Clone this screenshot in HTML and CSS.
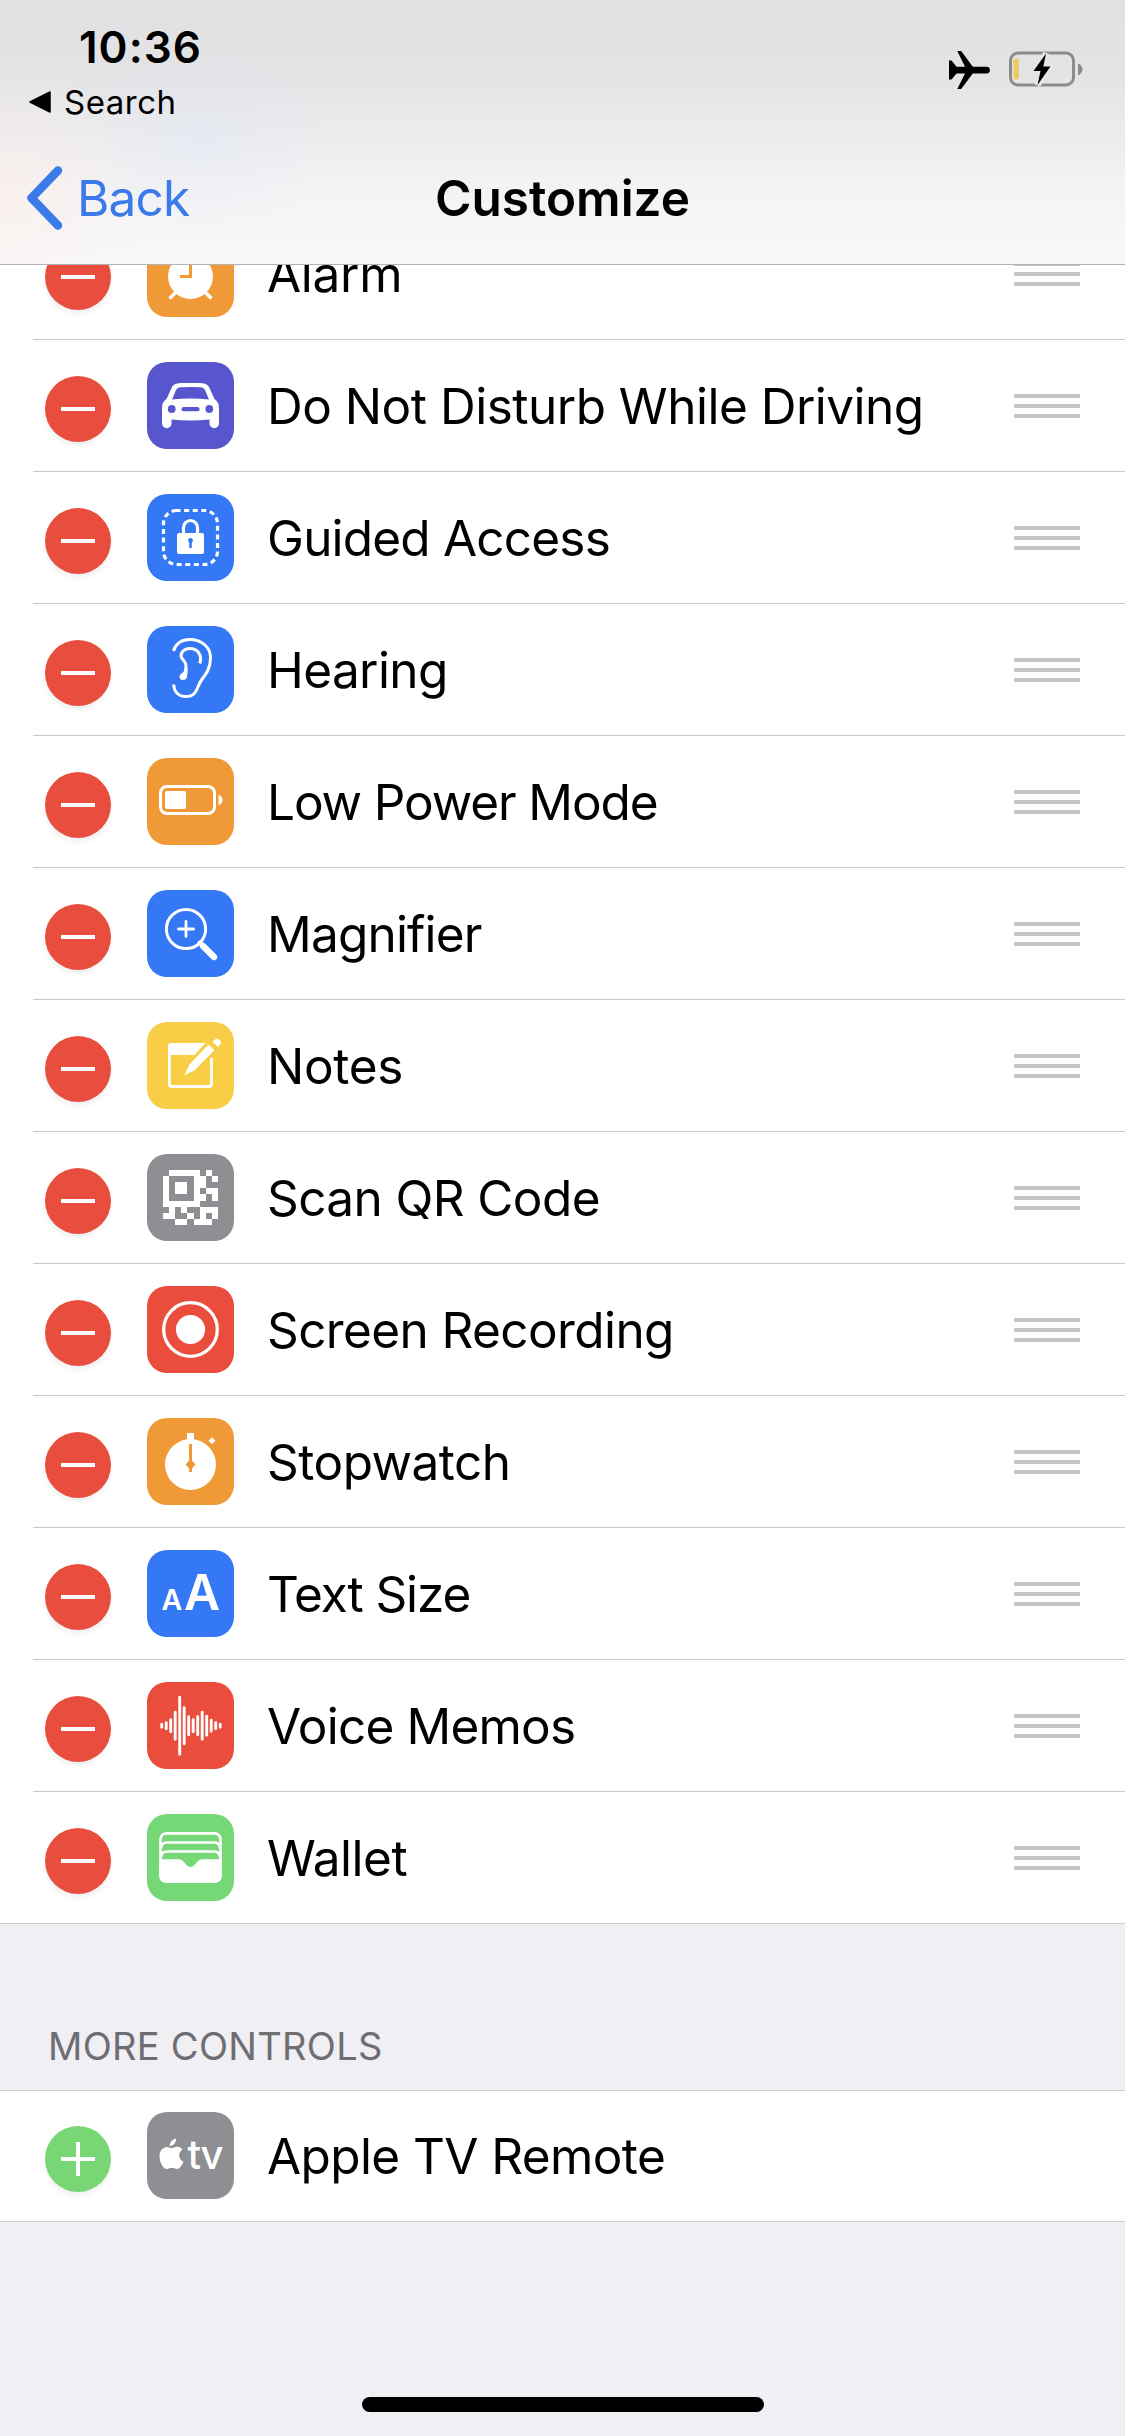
FILE: index.html
```html
<!DOCTYPE html>
<html lang="en">
<head>
  <meta charset="UTF-8" />
  <title>Customize</title>
  <link rel="stylesheet" href="styles.css">
</head>
<body>
  <header class="header">
    <div class="status-bar">
      <div class="status-left">
        <div class="time">10:36</div>
        <div class="return-app">
          <svg width="22" height="22" viewBox="0 0 22 22"><path d="M1 11L21 1V21Z" stroke="#000" stroke-width="1.500" stroke-linejoin="round" /></svg>
          <span>Search</span>
        </div>
      </div>
      <div class="status-right">
        <svg width="42" height="38" viewBox="0 0 42 38">
          <path d="M0 9.500H2.500L7.500 15.700H16L8.300 0H12.200L23.800 15.700H37.500a3.400 3.400 0 0 1 0 6.800H23.800L12.200 38H8.300L16 22.500H7.500L2.500 28.500H0Z" />
        </svg>
        <svg width="75" height="38" viewBox="0 0.500 75 38">
          <rect x="1.500" y="2.500" width="63" height="32" rx="7.500" fill="none" stroke="#8b8b8d" stroke-width="3" />
          <path d="M69 13q4.500 2 4.500 5.800T69 25Z" fill="#8b8b8d" />
          <rect x="4.500" y="8" width="5.500" height="21" rx="2" fill="#eecb62" />
          <path d="M37 3L24.500 20.500H31.500L28.500 34.500L41.500 16H34.300Z" stroke="#e5e5e7" stroke-width="6" paint-order="stroke" />
        </svg>
      </div>
    </div>
    <nav class="nav">
      <a class="back">
        <svg width="38" height="66" viewBox="0 0 38 66"><path d="M32 5.500L5.500 33L32 60.500" fill="none" stroke="#3b7ae9" stroke-width="8.500" stroke-linecap="round" stroke-linejoin="round" /></svg>
        <span>Back</span>
      </a>
      <h1>Customize</h1>
    </nav>
  </header>

  <ul class="list" id="included">
    <li class="row">
      <span class="toggle remove"></span>
      <svg class="icon orange" viewBox="0 0 87 87">
        <path d="M29 62L22.500 68.500M58 62L64.500 68.500" stroke="#fff" stroke-width="3.500" />
        <circle cx="43.500" cy="46.500" r="22.500" fill="#fff" />
        <path d="M43.500 31V46.500H33" fill="none" stroke="#ef9a37" stroke-width="3" />
      </svg>
      <span class="label loose">Alarm</span>
      <span class="handle"></span>
    </li>
    <li class="row">
      <span class="toggle remove"></span>
      <svg class="icon purple" viewBox="0 0 87 87">
        <path fill="#fff" fill-rule="evenodd" d="M35 21H52Q60 21 62 25L67.500 37Q72 40 72 46V61.500a4.700 4.700 0 0 1-9.500 0V57.500Q43.500 59.500 24.500 57.500V61.500a4.700 4.700 0 0 1-9.500 0V46Q15 40 19.500 37L25 25Q27 21 35 21ZM25 37.500Q43.500 35.500 62 37.500L58 28Q57 25.500 53.500 25.300Q43.500 24.700 33.500 25.300Q30 25.500 29 28Z" />
        <circle cx="24.700" cy="47" r="3.900" fill="#5856ce" />
        <circle cx="62.300" cy="47" r="3.900" fill="#5856ce" />
        <rect x="34.500" y="45" width="18" height="4.300" rx="2.100" fill="#5856ce" />
      </svg>
      <span class="label">Do Not Disturb While Driving</span>
      <span class="handle"></span>
    </li>
    <li class="row">
      <span class="toggle remove"></span>
      <svg class="icon blue" viewBox="0 0 87 87">
        <rect x="16.500" y="16.500" width="54" height="54" rx="13" fill="none" stroke="#fff" stroke-width="3.200" stroke-dasharray="5 3.600" stroke-dashoffset="1" />
        <path d="M36.500 40V33.500a7 7 0 0 1 14 0V40" fill="none" stroke="#fff" stroke-width="3.200" />
        <rect x="30" y="39" width="27" height="21" rx="2" fill="#fff" />
        <circle cx="43.500" cy="46.500" r="2.400" fill="#3478f6" />
        <path d="M43.500 46V54" stroke="#3478f6" stroke-width="2.600" />
      </svg>
      <span class="label tight">Guided Access</span>
      <span class="handle"></span>
    </li>
    <li class="row">
      <span class="toggle remove"></span>
      <svg class="icon blue" viewBox="0 0 87 87">
        <g fill="none" stroke="#fff" stroke-width="3">
          <path d="M26.500 25C29 17 35.500 13.500 43 13.500C55 13.500 63.500 21.500 63.500 31.500C63.500 42 59.500 47.500 54.500 54C49.500 60.500 51 70.500 38.500 70.500C31.500 70.500 27 66 26.700 58.500" />
          <path d="M52.800 37.500C55.500 29 50.500 22.500 43 22.500C35.500 22.500 33 28.500 34.500 31.500C36.500 35 39 36 39 40C39 44 38.300 46 38 50" />
        </g>
        <path d="M37.500 42H40.500Q41 46 40 50.500Q39.500 54 36 54Q32.500 54 32.500 50.500Q32.500 48.500 34.700 47.300Q37.500 46 37.500 42Z" fill="#fff" />
      </svg>
      <span class="label snug">Hearing</span>
      <span class="handle"></span>
    </li>
    <li class="row">
      <span class="toggle remove"></span>
      <svg class="icon orange" viewBox="0 0 87 87">
        <rect x="13.500" y="28.500" width="54" height="27" rx="6.500" fill="none" stroke="#fff" stroke-width="3" />
        <rect x="18" y="33" width="21" height="18" rx="2" fill="#fff" />
        <path d="M71.500 37Q75.500 38 75.500 42T71.500 47Z" fill="#fff" />
      </svg>
      <span class="label tighter">Low Power Mode</span>
      <span class="handle"></span>
    </li>
    <li class="row">
      <span class="toggle remove"></span>
      <svg class="icon blue" viewBox="0 0 87 87">
        <g fill="none" stroke="#fff" stroke-linecap="round">
          <circle cx="39" cy="39" r="19.600" stroke-width="3" />
          <path d="M39 31.500V46.500M31.500 39H46.500" stroke-width="2.800" />
          <path d="M52.500 52.500L55 55" stroke-width="4" />
          <path d="M56 56L67 67" stroke-width="6.500" />
        </g>
      </svg>
      <span class="label tight">Magnifier</span>
      <span class="handle"></span>
    </li>
    <li class="row">
      <span class="toggle remove"></span>
      <svg class="icon yellow" viewBox="0 0 87 87">
        <path d="M21 33V24Q21 21 24 21H58.500L47.500 33Z" fill="#fff" />
        <path d="M22.300 30V62Q22.300 64.500 24.800 64.500H62Q64.500 64.500 64.500 62V36" fill="none" stroke="#fff" stroke-width="2.800" />
        <path d="M37.500 53L42 43L61.500 22.500L67.500 28L47.500 48.500Z" fill="#fff" stroke="#f7ce46" stroke-width="3" paint-order="stroke" />
        <path d="M65.500 20L68.500 17Q70 16 71.500 17L73.500 19Q74.500 20.500 73.500 22L71 25Z" fill="#fff" />
      </svg>
      <span class="label loose">Notes</span>
      <span class="handle"></span>
    </li>
    <li class="row">
      <span class="toggle remove"></span>
      <svg class="icon gray" viewBox="0 0 87 87">
        <!-- 9x9 modules, one line per row -->
        <path transform="translate(16 16) scale(6.100)" fill="#fff" shape-rendering="crispEdges" d="
          M1 0h5v1h-5z M7 0h1v1h-1z
          M0 1h1v1h-1z M5 1h2v1h-2z M8 1h1v1h-1z
          M0 2h1v1h-1z M2 2h2v1h-2z M5 2h2v1h-2z
          M0 3h1v1h-1z M2 3h2v1h-2z M5 3h1v1h-1z M7 3h2v1h-2z
          M0 4h1v1h-1z M5 4h2v1h-2z M8 4h1v1h-1z
          M0 5h6v1h-6z
          M1 6h1v1h-1z M3 6h1v1h-1z M6 6h3v1h-3z
          M0 7h2v1h-2z M4 7h1v1h-1z M6 7h1v1h-1z M8 7h1v1h-1z
          M2 8h2v1h-2z M5 8h3v1h-3z" />
      </svg>
      <span class="label snug">Scan QR Code</span>
      <span class="handle"></span>
    </li>
    <li class="row">
      <span class="toggle remove"></span>
      <svg class="icon red" viewBox="0 0 87 87">
        <circle cx="43.500" cy="43.500" r="26.800" fill="none" stroke="#fff" stroke-width="3.300" />
        <circle cx="43.500" cy="43.500" r="14.600" fill="#fff" />
      </svg>
      <span class="label snug">Screen Recording</span>
      <span class="handle"></span>
    </li>
    <li class="row">
      <span class="toggle remove"></span>
      <svg class="icon orange" viewBox="0 0 87 87">
        <circle cx="43.500" cy="46.500" r="25.500" fill="#fff" />
        <rect x="40" y="15" width="7" height="9" fill="#fff" />
        <path d="M63.300 21L66.700 24.500" stroke="#fff" stroke-width="5" />
        <path d="M43.500 26V54" stroke="#ef9a37" stroke-width="3" />
        <path d="M43.500 41L48.500 46.500L43.500 52L38.500 46.500Z" fill="#ef9a37" />
      </svg>
      <span class="label">Stopwatch</span>
      <span class="handle"></span>
    </li>
    <li class="row">
      <span class="toggle remove"></span>
      <svg class="icon blue" viewBox="0 0 87 87">
        <text class="glyph" x="14.500" y="60" font-size="28.500" textLength="21">A</text>
        <text class="glyph" x="37" y="60" font-size="49.500" textLength="36">A</text>
      </svg>
      <span class="label tighter">Text Size</span>
      <span class="handle"></span>
    </li>
    <li class="row">
      <span class="toggle remove"></span>
      <svg class="icon red" viewBox="0 0 87 87">
        <path d="M14.700 42.200v3M19.200 40.700v6M23.700 37.700v12M28.200 30.200v27M32.700 15.200v57M37.200 25.700v36M41.700 34.700v18M46.200 37.700v12M50.700 34.700v18M55.200 30.200v27M59.700 34.200v19M64.200 38.200v11M68.700 40.700v6M73.200 42.200v3" stroke="#fff" stroke-width="2.900" stroke-linecap="round" />
      </svg>
      <span class="label tight">Voice Memos</span>
      <span class="handle"></span>
    </li>
    <li class="row last">
      <span class="toggle remove"></span>
      <svg class="icon green" viewBox="0 0 87 87">
        <g fill="none" stroke="#fff" stroke-width="2.700">
          <rect x="13.500" y="19.300" width="60" height="48" rx="6" />
          <path d="M14 34Q14.500 28.500 20 28.500H67Q72.500 28.500 73 34" />
          <path d="M14 43Q14.500 37.500 20 37.500H67Q72.500 37.500 73 43" />
        </g>
        <path d="M12.300 45.300H32Q35 45.300 37 48Q40.500 53 43.500 53T50 48Q52 45.300 55 45.300H74.700V62Q74.700 68.700 68 68.700H19Q12.300 68.700 12.300 62Z" fill="#fff" />
      </svg>
      <span class="label">Wallet</span>
      <span class="handle"></span>
    </li>
  </ul>

  <h2>MORE CONTROLS</h2>

  <ul class="list more" id="moreControls">
    <li class="row last">
      <span class="toggle add"></span>
      <svg class="icon gray" viewBox="0 0 87 87">
        <path fill="#fff" d="M29 26.500C29.300 30.500 26.500 34 22.700 34C22.400 30.500 25.500 27 29 26.500ZM24.500 36.300C26.300 36.300 28 34.600 30.500 34.800C32.800 35 34.500 36 35.500 37.600C30.500 41 31.500 47.800 36.500 49.800C35.500 52.500 32.800 57 30 57C28 57 27 55.800 24.800 55.800S21.500 57 19.700 57C16 57 12.500 50 12.500 44.500C12.500 38.500 16.200 35 20 35C22 35 23.300 36.300 24.500 36.300Z" />
        <text class="glyph tv" x="40.500" y="57" font-size="40" textLength="36">tv</text>
      </svg>
      <span class="label snug">Apple TV Remote</span>
    </li>
  </ul>

  <div class="home-indicator"></div>
</body>
</html>
```
FILE: styles.css
```css
* {
  box-sizing: border-box;
}
body {
  display: flex;
  flex-direction: column;
  height: 2436px;
  margin: 0;
  overflow: hidden;
  background: #efeff4;
  color: #000;
  font-family: Inter, "Liberation Sans", sans-serif;
}
h1, h2, ul {
  margin: 0;
  padding: 0;
  font-weight: 400;
}
svg {
  display: block;
}

/* Header */
.header {
  position: relative;
  z-index: 1;
  height: 265px;
  flex: none;
  border-bottom: 1px solid #b2b2b4;
  background:
    radial-gradient(ellipse 150px 130px at 0 190px, rgba(255,235,230,0.45), rgba(255,235,230,0)),
    radial-gradient(ellipse 130px 100px at 200px 140px, rgba(222,230,246,0.4), rgba(222,230,246,0)),
    linear-gradient(#e1e1e3 0, #e3e3e5 70px, #ebebed 130px, #f3f3f4 185px, #f8f8f8 264px);
}
.status-bar {
  display: flex;
  justify-content: space-between;
  height: 133px;
  padding: 17px 41px 0 29px;
}
.time {
  padding-left: 50px;
  font-size: 44px;
  line-height: 60px;
  font-weight: 600;
  letter-spacing: 1px;
}
.return-app {
  display: flex;
  align-items: center;
  gap: 13px;
  font-size: 33px;
  line-height: 50px;
  letter-spacing: 0.5px;
}
.status-right {
  display: flex;
  gap: 18px;
  padding-top: 34px;
}
.nav {
  display: grid;
  grid-template-columns: 1fr auto 1fr;
  align-items: center;
  height: 130px;
  font-size: 49.5px;
  line-height: 60px;
}
.back {
  display: flex;
  align-items: center;
  gap: 13px;
  padding-left: 26px;
  color: #3b7ae9;
  letter-spacing: -0.8px;
}
.nav h1 {
  font-size: inherit;
  font-weight: 600;
}

/* Lists */
.list {
  list-style: none;
  flex: none;
  background: #fff;
}
#included {
  margin-top: -57px;
}
.row {
  display: flex;
  align-items: center;
  height: 132px;
  padding: 0 45px;
  background: linear-gradient(#c8c7cc, #c8c7cc) 33px bottom / 100% 1px no-repeat;
}
.row.last {
  background-position: 0 bottom;
}
.more {
  box-shadow: inset 0 1px #c8c7cc;
}
.toggle {
  width: 66px;
  height: 66px;
  margin-top: 6px;
  border-radius: 50%;
  box-shadow: 0 4px 5px rgba(0,0,0,0.06);
}
.remove {
  background: linear-gradient(#fff, #fff) center / 34px 4px no-repeat #e94d3d;
}
.add {
  background:
    linear-gradient(#fff, #fff) center / 34px 4px no-repeat,
    linear-gradient(#fff, #fff) center / 4px 34px no-repeat,
    #78d774;
}
.icon {
  width: 87px;
  height: 87px;
  margin: 0 33px 1px 36px;
  border-radius: 20px;
}
.orange { background: #ef9a37; }
.purple { background: #5856ce; }
.blue { background: #3478f6; }
.yellow { background: #f7ce46; }
.gray { background: #8e8e93; }
.red { background: #eb4d3d; }
.green { background: #75d775; }
.glyph {
  fill: #fff;
  font-weight: 600;
}
.tv {
  font-weight: 500;
}
.label {
  flex: 1;
  font-size: 49.5px;
  line-height: 60px;
  letter-spacing: -0.5px;
  white-space: nowrap;
}
.loose { letter-spacing: -0.3px; }
.snug { letter-spacing: -0.6px; }
.tight { letter-spacing: -0.8px; }
.tighter { letter-spacing: -1.1px; }
.handle {
  width: 66px;
  height: 24px;
  background: repeating-linear-gradient(#c6c6c6 0 4px, transparent 4px 10px);
}

h2 {
  flex: none;
  height: 166px;
  padding: 92px 0 0 48px;
  color: #6d6d72;
  font-size: 38px;
  line-height: 60px;
  letter-spacing: 0.3px;
}

.home-indicator {
  width: 402px;
  height: 15px;
  margin: auto auto 24px 362px;
  border-radius: 8px;
  background: #000;
}
```
